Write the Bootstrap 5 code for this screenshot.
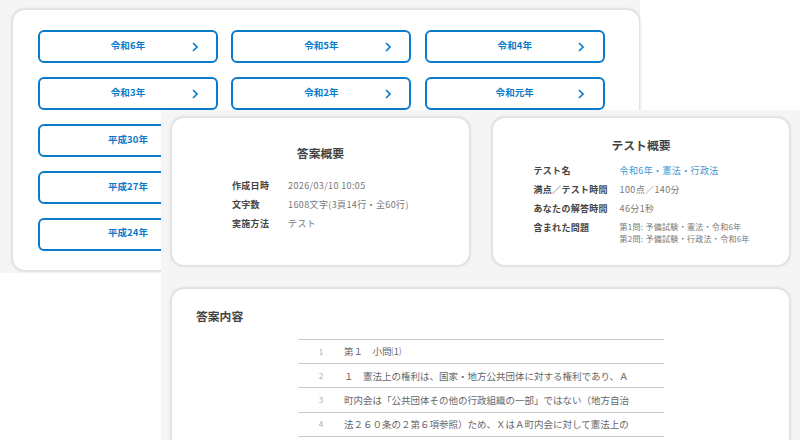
<!DOCTYPE html>
<html lang="ja">
<head>
<meta charset="utf-8">
<title>答案</title>
<link href="https://cdn.jsdelivr.net/npm/bootstrap@5.3.0/dist/css/bootstrap.min.css" rel="stylesheet">
<style>
html,body{height:100%;overflow:hidden;background:#fff;margin:0}
body{font-family:"Noto Sans CJK JP","Noto Sans",sans-serif;color:#555;position:relative;width:800px;height:440px}
.win-back{position:absolute;left:0;top:0;width:640px;height:273px;background:#f5f5f5;padding:10px 0 0 13px}
.win-front{position:absolute;left:161px;top:110px;width:639px;height:330px;background:#f5f5f5;padding:8px 11px 0 11px;overflow:hidden}
.panel{background:#fff;border:0;border-radius:12px;box-shadow:0 0 2px 1.5px rgba(0,0,0,.085)}
.back-panel{width:626px;height:260px;padding:20px 34px 0 25px;display:grid;grid-template-columns:repeat(3,180px);grid-auto-rows:33px;column-gap:13.4px;row-gap:13.9px}
.yr-btn{position:relative;border:2px solid #0a7acb;border-radius:6px;color:#0a7acb;font-size:9.5px;line-height:1.5;font-weight:700;letter-spacing:.08px;padding:0 0 3px;background:#fff}
.yr-btn svg{position:absolute;right:18.500px;top:10px}
.col-first{grid-column:1}
.sum-a{width:297px;height:147px;padding:26px 0 0 60px}
.sum-b{width:296px;height:147px;padding:18px 0 0 40.500px}
.sum-title{font-size:11.800px;font-weight:700;color:#444;line-height:18px;letter-spacing:.03px}
.sum-a .sum-title{margin:0 0 14px -60px}
.sum-b .sum-title{margin:0 0 6.500px -40.500px}
.kv{font-size:9px;line-height:19px;letter-spacing:.3px}
.kv-k{font-weight:700;color:#444;flex:none}
.sum-a .kv-k{width:56px}
.sum-b .kv-k{width:86px}
.kv-v{color:#777;letter-spacing:.38px}
.kv-v a{color:#3b97d3;text-decoration:none}
.kv-small{font-size:8px;line-height:12.500px;padding-top:3px;letter-spacing:.3px}
.answer{margin-top:24px;height:200px;padding:18px 24px 0}
.ans-title{font-size:11.800px;font-weight:700;color:#444;line-height:18px;margin-bottom:14px}
.ans-lines{margin-left:102px;width:366px;border-top:1px solid #c8c8c8;font-size:9.500px;color:#666}
.ans-line{height:24.200px;border-bottom:1px solid #c8c8c8}
.ans-no{width:46px;color:#aaa;font-size:8px}
</style>
</head>
<body>
<div class="win-back">
  <div class="card panel back-panel">
    <a class="btn yr-btn d-flex align-items-center justify-content-center" href="#">令和6年<svg width="6" height="10" viewBox="0 0 6 10"><path d="M1 1l4 4-4 4" fill="none" stroke="#0a7acb" stroke-width="1.600"/></svg></a>
    <a class="btn yr-btn d-flex align-items-center justify-content-center" href="#">令和5年<svg width="6" height="10" viewBox="0 0 6 10"><path d="M1 1l4 4-4 4" fill="none" stroke="#0a7acb" stroke-width="1.600"/></svg></a>
    <a class="btn yr-btn d-flex align-items-center justify-content-center" href="#">令和4年<svg width="6" height="10" viewBox="0 0 6 10"><path d="M1 1l4 4-4 4" fill="none" stroke="#0a7acb" stroke-width="1.600"/></svg></a>
    <a class="btn yr-btn d-flex align-items-center justify-content-center" href="#">令和3年<svg width="6" height="10" viewBox="0 0 6 10"><path d="M1 1l4 4-4 4" fill="none" stroke="#0a7acb" stroke-width="1.600"/></svg></a>
    <a class="btn yr-btn d-flex align-items-center justify-content-center" href="#">令和2年<svg width="6" height="10" viewBox="0 0 6 10"><path d="M1 1l4 4-4 4" fill="none" stroke="#0a7acb" stroke-width="1.600"/></svg></a>
    <a class="btn yr-btn d-flex align-items-center justify-content-center" href="#">令和元年<svg width="6" height="10" viewBox="0 0 6 10"><path d="M1 1l4 4-4 4" fill="none" stroke="#0a7acb" stroke-width="1.600"/></svg></a>
    <a class="btn yr-btn col-first d-flex align-items-center justify-content-center" href="#">平成30年</a>
    <a class="btn yr-btn col-first d-flex align-items-center justify-content-center" href="#">平成27年</a>
    <a class="btn yr-btn col-first d-flex align-items-center justify-content-center" href="#">平成24年</a>
  </div>
</div>
<div class="win-front">
  <div class="d-flex front-top gap-4">
    <div class="card panel sum-a">
      <div class="sum-title text-center">答案概要</div>
      <div class="kv d-flex"><div class="kv-k">作成日時</div><div class="kv-v">2026/03/10 10:05</div></div>
      <div class="kv d-flex"><div class="kv-k">文字数</div><div class="kv-v">1608文字(3頁14行・全60行)</div></div>
      <div class="kv d-flex"><div class="kv-k">実施方法</div><div class="kv-v">テスト</div></div>
    </div>
    <div class="card panel sum-b">
      <div class="sum-title text-center">テスト概要</div>
      <div class="kv d-flex"><div class="kv-k">テスト名</div><div class="kv-v"><a href="#">令和6年・憲法・行政法</a></div></div>
      <div class="kv d-flex"><div class="kv-k">満点／テスト時間</div><div class="kv-v">100点／140分</div></div>
      <div class="kv d-flex"><div class="kv-k">あなたの解答時間</div><div class="kv-v">46分1秒</div></div>
      <div class="kv d-flex"><div class="kv-k">含まれた問題</div><div class="kv-v kv-small">第1問: 予備試験・憲法・令和6年<br>第2問: 予備試験・行政法・令和6年</div></div>
    </div>
  </div>
  <div class="card panel answer">
    <div class="ans-title">答案内容</div>
    <div class="ans-lines">
      <div class="ans-line d-flex align-items-center"><div class="ans-no text-center">1</div><div>第１　小問⑴</div></div>
      <div class="ans-line d-flex align-items-center"><div class="ans-no text-center">2</div><div>１　憲法上の権利は、国家・地方公共団体に対する権利であり、Ａ</div></div>
      <div class="ans-line d-flex align-items-center"><div class="ans-no text-center">3</div><div>町内会は「公共団体その他の行政組織の一部」ではない（地方自治</div></div>
      <div class="ans-line d-flex align-items-center"><div class="ans-no text-center">4</div><div>法２６０条の２第６項参照）ため、ＸはＡ町内会に対して憲法上の</div></div>
    </div>
  </div>
</div>
</body>
</html>
